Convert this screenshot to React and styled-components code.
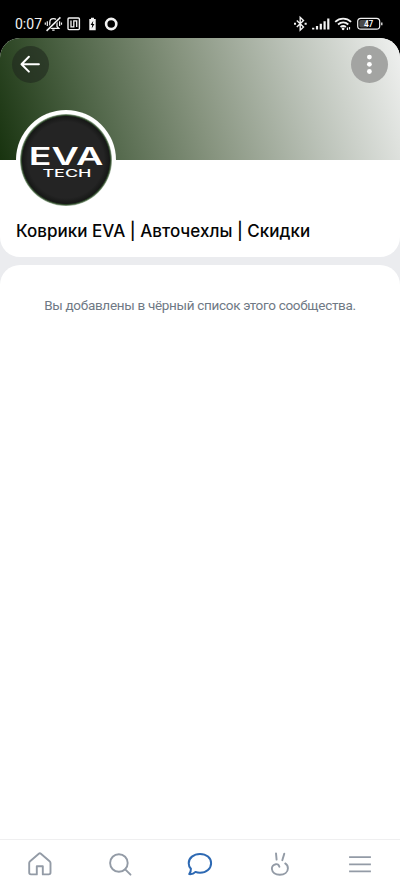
import React from 'react'
import styled, { createGlobalStyle } from 'styled-components';

const tabs = ['home', 'search', 'chats', 'clips', 'menu'];

function StatusIcons() {
    return (
        <svg width="76" height="18" viewBox="44 15 76 18" fill="none" stroke="#f2f2f2" strokeWidth="1.3">
            <path d="M48 28.4L49.8 26.4V22.4C49.8 20.2 51.3 18.6 53.4 18.6S57 20.2 57 22.4V26.4L58.8 28.4ZM52.2 30.2H54.6" />
            <path d="M46.2 30.6L60.4 17.4" stroke="#000" strokeWidth="3" />
            <path d="M46.6 30.9L60.4 17.4" strokeWidth="1.5" />
            <path d="M47.3 21.2V26M45.3 22.6V24.8M59.6 21.2V26M61.5 22.6V24.8" strokeWidth="1.2" />
            <rect x="68" y="18" width="11.4" height="11.6" rx="1" strokeWidth="1.4" />
            <path d="M71 20.6V26.9H73.8V20.8H76.7V27" strokeWidth="1.3" />
            <path d="M91 17.8H94V19H95.7V30.2H89.3V19H91Z" fill="#f2f2f2" stroke="none" />
            <path d="M93.3 20.7L90.6 25H92.2L91.7 28.4L94.4 24H92.8Z" fill="#000" stroke="none" />
            <circle cx="111.2" cy="24" r="5.1" strokeWidth="2.6" />
        </svg>
    )
}

function SignalIcons() {
    return (
        <svg width="90" height="18" viewBox="293 15 90 18" fill="none" stroke="#f2f2f2" strokeWidth="1.4">
            <path d="M296.8 20.5L303.5 27L300.2 30.2V17.3L303.5 20.5L296.8 27" />
            <path d="M294 23.8H296M304.6 23.8H306.7" strokeWidth="2" />
            <path d="M313.2 27.8V29.5M317 26V29.5M320.8 23.8V29.5M324.6 21.3V29.5M328.3 18.5V29.5" strokeWidth="2.2" />
            <path d="M335.2 21.9C339.9 17.6 346.4 17.6 351.1 21.9M338 24.5C341.1 21.8 345.3 21.8 348.3 24.5M340.5 27C342.2 25.7 344.2 25.7 345.9 27" strokeWidth="1.8" />
            <circle cx="343.1" cy="28.8" r="1.4" fill="#f2f2f2" stroke="none" />
            <path d="M347.4 30V27.6M349.5 27V29.4" strokeWidth="1.2" />
            <rect x="357.7" y="18.4" width="22" height="10.8" rx="3.2" strokeWidth="1.2" />
            <rect x="359.3" y="20" width="9" height="7.6" rx="1.8" fill="#4a4a4a" stroke="none" />
            <path d="M381.8 22.5V25.3" strokeWidth="1.3" />
            <text x="368.6" y="26.8" fill="#fff" stroke="none" fontSize="8.3" fontWeight="500" fontFamily="Roboto, sans-serif" textAnchor="middle">47</text>
        </svg>
    )
}

function AvatarLogo() {
    return (
        <svg width="92" height="92" viewBox="20 114 92 92" fill="#fff" fontFamily="Inter, sans-serif">
            <text x="28.8" y="164.8" fontSize="24.4" fontWeight="600" textLength="74.5" lengthAdjust="spacingAndGlyphs">EVA</text>
            <text x="42.4" y="177" fontSize="10.4" fontWeight="500" textLength="49" lengthAdjust="spacingAndGlyphs">TECH</text>
        </svg>
    )
}

function TabIcon({ name }) {
    return (
        <svg width="28" height="28" viewBox="0 0 28 28" fill="none" stroke="currentColor" strokeWidth="1.9" strokeLinecap="round" strokeLinejoin="round">
            {name === 'home' && <path d="M5 24.4C4 24.4 3.2 23.7 3.2 22.6V13.1C3.2 12.3 3.5 11.7 4.1 11.2L12.8 3.7C13.5 3.1 14.2 3.1 14.9 3.7L23.6 11.2C24.2 11.7 24.5 12.3 24.5 13.1V22.6C24.5 23.7 23.7 24.4 22.7 24.4H16.8V16.2H10.8V24.4Z" />}
            {name === 'search' && (
                <>
                    <circle cx="12.9" cy="13" r="8.8" />
                    <path d="M19.2 19.4L24.5 24.7" />
                </>
            )}
            {name === 'chats' && <path d="M14 3.9C20.4 3.9 25.1 8 25.1 13.3S20.4 22.8 14 22.8C12.3 22.8 10.8 22.5 9.5 21.9C8.1 23.4 5.7 24.3 3.2 24.1C4.4 22.7 5 21 4.9 18.8C3.5 17.3 2.7 15.4 2.7 13.3C2.7 8 7.6 3.9 14 3.9Z" strokeWidth="2" />}
            {name === 'clips' && <path d="M10 3.4L10.6 9.6M18.3 3.6L16.3 10.2M13.4 16.8C12.9 14.8 11.4 14 9.8 14.2C7.3 14.5 5.7 16.6 5.9 19C6.2 22.5 9.4 24.7 13.8 24.7C18.5 24.7 21.8 22.3 21.9 18.5C22 16.5 21.1 14.6 19.2 13.4" />}
            {name === 'menu' && <path d="M4 7.2H24M4 14.3H24M4 21.4H24" strokeLinecap="square" strokeWidth="1.8" />}
        </svg>
    )
}

function App() {
    return (
        <AppStyled>
            <GlobalStyle />
            <StatusBar>
                <Clock>0:07</Clock>
                <StatusIcons />
                <Spacer />
                <SignalIcons />
            </StatusBar>
            <ProfileCard>
                <Cover>
                    <RoundButton $bg="rgba(32, 40, 30, 0.6)" aria-label="Назад">
                        <svg width="25" height="25" viewBox="0 0 25 25" fill="none" stroke="#fff" strokeWidth="2" strokeLinecap="round" strokeLinejoin="round">
                            <path d="M20.9 12.2H3.9M10.9 4.8L3.5 12.2L10.9 19.6" />
                        </svg>
                    </RoundButton>
                    <RoundButton $bg="#a3a4a2" aria-label="Ещё">
                        <svg width="25" height="25" viewBox="0 0 25 25" fill="#fff">
                            <circle cx="12.4" cy="5.1" r="2.4" />
                            <circle cx="12.4" cy="12.3" r="2.4" />
                            <circle cx="12.4" cy="19.5" r="2.4" />
                        </svg>
                    </RoundButton>
                </Cover>
                <Avatar>
                    <AvatarLogo />
                </Avatar>
                <Title>Коврики EVA | Авточехлы | Скидки</Title>
            </ProfileCard>
            <ContentCard>
                <Message>Вы добавлены в чёрный список этого сообщества.</Message>
            </ContentCard>
            <TabBar>
                {tabs.map(name => (
                    <Tab key={name} $active={name === 'chats'}>
                        <TabIcon name={name} />
                    </Tab>
                ))}
            </TabBar>
        </AppStyled>
    )
}

const GlobalStyle = createGlobalStyle`
    *{
        box-sizing: border-box;
    }
    body{
        margin: 0;
        background-color: #fff;
    }
`;

const AppStyled = styled.div`
    display: flex;
    flex-direction: column;
    width: 400px;
    height: 889px;
    overflow: hidden;
    background: linear-gradient(#000 60px, #ebecef 60px);
    font-family: Roboto, sans-serif;
`;

const StatusBar = styled.div`
    display: flex;
    flex: none;
    align-items: flex-start;
    height: 38px;
    padding: 15px 17px 0 15px;
    color: #f2f2f2;
`;

const Clock = styled.span`
    width: 29px;
    font-size: 14px;
    line-height: 18px;
    white-space: nowrap;
`;

const Spacer = styled.div`
    flex: 1;
`;

const ProfileCard = styled.div`
    flex: none;
    height: 219px;
    overflow: hidden;
    border-radius: 20px;
    background-color: #fff;
`;

const Cover = styled.div`
    display: flex;
    justify-content: space-between;
    align-items: flex-start;
    height: 122px;
    padding: 8px 12px;
    background: linear-gradient(72deg, #18330f 0%, #4c6244 23%, #87947f 49%, #bbc2b8 74%, #f0f1f0 100%);
`;

const RoundButton = styled.button`
    display: flex;
    align-items: center;
    justify-content: center;
    width: 37px;
    height: 37px;
    padding: 0;
    border: 0;
    border-radius: 50%;
    background: ${props => props.$bg};
`;

const Avatar = styled.div`
    position: relative;
    width: 100px;
    height: 100px;
    margin: -50px 0 0 16px;
    padding: 4px;
    border-radius: 50%;
    background-color: #fff;
    svg{
        display: block;
        border-radius: 50%;
        background: radial-gradient(circle, #242424 0 38px, #171817 43.5px, #2c4528 44.5px, #a9bba6 46px);
    }
`;

const Title = styled.h1`
    margin: 9px 0 0 16px;
    font-family: Inter, sans-serif;
    font-size: 17px;
    font-weight: 500;
    letter-spacing: 0.02px;
    line-height: 24px;
    white-space: nowrap;
    color: #050505;
`;

const ContentCard = styled.div`
    flex: 1;
    margin-top: 8px;
    padding-top: 31px;
    border-radius: 20px 20px 0 0;
    background-color: #fff;
`;

const Message = styled.p`
    margin: 0;
    font-size: 13.5px;
    letter-spacing: -0.3px;
    line-height: 18px;
    text-align: center;
    white-space: nowrap;
    color: #6f7985;
`;

const TabBar = styled.div`
    display: flex;
    flex: none;
    height: 50px;
    padding-bottom: 2px;
    border-top: 1px solid #efeff0;
    background-color: #fff;
`;

const Tab = styled.div`
    display: flex;
    flex: 1;
    align-items: center;
    justify-content: center;
    color: ${props => props.$active ? '#2d69b3' : '#939ba6'};
`;

export default App;
